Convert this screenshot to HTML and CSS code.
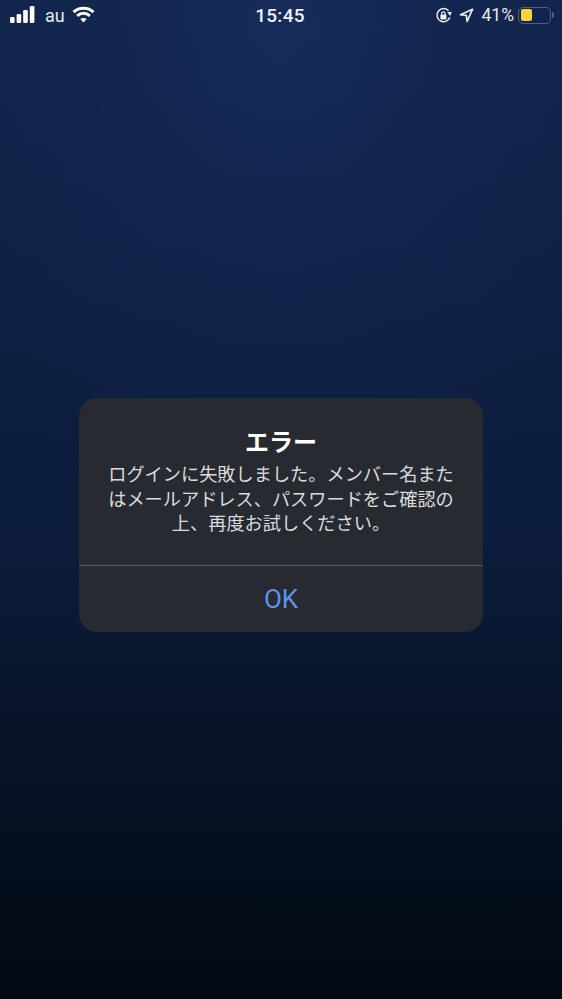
FILE: index.html
```html
<!DOCTYPE html>
<html lang="ja">
<head>
<meta charset="utf-8">
<title>エラー</title>
<link rel="stylesheet" href="styles.css">
</head>
<body>
<div class="screen">
  <header class="status">
    <div class="status-left">
      <svg class="signal" width="25" height="17" viewBox="0 0 25 17"><rect x="0" y="11" width="4.6" height="6" rx="1.2"/><rect x="6.6" y="8" width="4.6" height="9" rx="1.2"/><rect x="13.2" y="4" width="4.6" height="13" rx="1.2"/><rect x="19.8" y="0" width="4.6" height="17" rx="1.2"/></svg>
      <span class="carrier">au</span>
      <svg class="wifi" width="23" height="17" viewBox="0 0 23 17"><path d="M1.5 6.2C7 1 16 1 21.5 6.2" /><path d="M5.2 9.8C8.8 6.5 14.2 6.5 17.8 9.8"/><path d="M11.5 16.6l-3.2-3.5c1.8-1.5 4.6-1.5 6.4 0z" class="wifi-dot"/></svg>
    </div>
    <div class="clock">15:45</div>
    <div class="status-right">
      <svg class="lock" width="17" height="17" viewBox="0 0 17 17"><path d="M14.8 10.5A6.6 6.6 0 1 1 13.6 3.8"/><path class="fill" d="M12.2 5.2l4.6-.4-1.6 4.2z"/><rect class="fill" x="5.4" y="7.6" width="6" height="4.8" rx=".8"/><path d="M6.6 7.8V6.6a1.8 1.8 0 0 1 3.6 0v1.2" class="thin"/></svg>
      <svg class="arrow" width="15" height="15" viewBox="0 0 15 15"><path d="M13.6 1.2L1.4 6.8l5.9.6.8 6z"/></svg>
      <span class="percent">41%</span>
      <div class="battery"><div class="battery-body"><div class="battery-level"></div></div><div class="battery-cap"></div></div>
    </div>
  </header>
  <main class="stage">
    <section class="alert">
      <div class="alert-body">
        <h1 class="alert-title">エラー</h1>
        <p class="alert-text">ログインに失敗しました。メンバー名また<br>はメールアドレス、パスワードをご確認の<br>上、再度お試しください。</p>
      </div>
      <button class="alert-button">OK</button>
    </section>
  </main>
</div>
</body>
</html>
```
FILE: styles.css
```css
* { box-sizing: border-box; }
html, body { margin: 0; padding: 0; height: 100%; }
body { font-family: "Liberation Sans", "Noto Sans CJK JP", sans-serif; }
.screen {
  width: 562px;
  height: 999px;
  overflow: hidden;
  display: flex;
  flex-direction: column;
  background:
    radial-gradient(ellipse 400px 500px at 50% 3%, rgba(24,46,96,.75) 0%, rgba(20,40,84,.4) 50%, rgba(20,40,84,0) 100%),
    linear-gradient(180deg, #11244a 0%, #0e2043 30%, #0b1b39 55%, #071328 75%, #040d1a 90%, #030a13 100%);
  color: #fff;
}
.status {
  height: 30px;
  padding: 0 8px 0 10px;
  display: grid;
  grid-template-columns: 1fr auto 1fr;
  align-items: center;
}
.status-left { display: flex; align-items: center; }
.signal { fill: #fff; margin-top: -1px; }
.carrier { font-family: Roboto, "Liberation Sans", sans-serif; font-size: 18px; margin-left: 10px; color: #e4e8ef; }
.wifi { margin-left: 7px; margin-top: -1px; }
.wifi path { fill: none; stroke: #fff; stroke-width: 3; }
.wifi .wifi-dot { fill: #fff; stroke: none; }
.clock { font-family: Roboto, "Liberation Sans", sans-serif; font-size: 19px; font-weight: 500; color: #eef1f5; letter-spacing: .3px; margin-left: -4px; }
.status-right { display: flex; align-items: center; justify-content: flex-end; }
.lock path { fill: none; stroke: #eef1f5; stroke-width: 1.5; }
.lock .fill, .lock rect.fill { fill: #eef1f5; stroke: none; }
.lock .thin { stroke-width: 1.2; }
.arrow { margin-left: 7px; }
.arrow path { fill: none; stroke: #eef1f5; stroke-width: 1.6; stroke-linejoin: round; }
.percent { font-family: Roboto, "Liberation Sans", sans-serif; font-size: 17.5px; color: #e4e8ef; margin-left: 8px; }
.battery { display: flex; align-items: center; margin-left: 4px; }
.battery-body { width: 33px; height: 17px; border: 1.5px solid #4f5f7f; border-radius: 5px; padding: 1.5px; }
.battery-level { width: 11.5px; height: 100%; background: #f6d33f; border-radius: 2px; }
.battery-cap { width: 2px; height: 6px; margin-left: 1px; background: #4f5f7f; border-radius: 0 2px 2px 0; }
.stage { flex: 1; padding: 368px 79px 0; }
.alert {
  width: 404px;
  height: 234px;
  border-radius: 18px;
  background: #272b31;
  display: flex;
  flex-direction: column;
}
.alert-body { height: 168px; padding-top: 30px; border-bottom: 1px solid #55585e; text-align: center; }
.alert-title { margin: 0; font-size: 24px; line-height: 30px; font-weight: 700; color: #fff; }
.alert-text { margin: 5px 0 0; font-size: 18.2px; line-height: 24.5px; color: #d9dbde; }
.alert-button {
  flex: 1;
  border: 0;
  background: none;
  color: #5b94ea;
  font-family: Roboto, "Liberation Sans", sans-serif;
  font-size: 26px;
  padding: 0;
}
```
